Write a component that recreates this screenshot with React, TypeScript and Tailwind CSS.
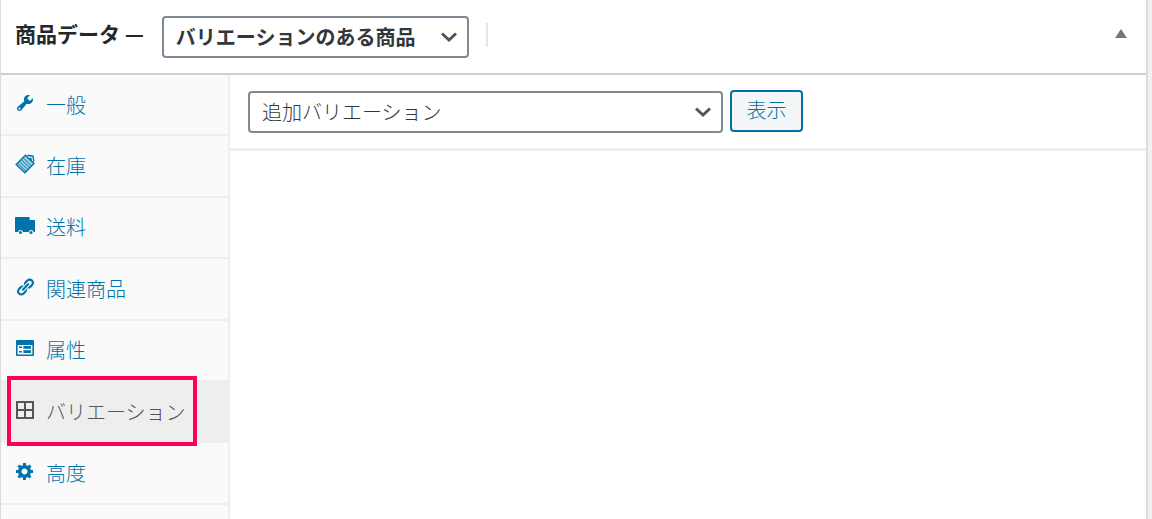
import { useState } from 'react';
import type { ReactNode } from 'react';
import clsx from 'clsx';

type Tab = {
  id: string;
  label: string;
  icon: ReactNode;
};

const tabs: Tab[] = [
  {
    id: 'general',
    label: '一般',
    icon: (
      <path d="M16.68 9.77c-1.34 1.34-3.3 1.67-4.95.99l-5.41 6.52c-.99.99-2.59.99-3.58 0s-.99-2.59 0-3.57l6.52-5.42c-.68-1.65-.35-3.61.99-4.95 1.28-1.28 3.12-1.62 4.72-1.06l-2.89 2.89 2.82 2.82 2.86-2.87c.53 1.58.18 3.39-1.08 4.65zM3.81 16.21c.4.39 1.04.39 1.43 0 .4-.4.4-1.04 0-1.43-.39-.4-1.03-.4-1.43 0-.39.39-.39 1.03 0 1.43z" />
    ),
  },
  {
    id: 'inventory',
    label: '在庫',
    icon: (
      <>
        <path d="M10.4 1.2L19.2 9.6 9.8 19 1 10.4z" opacity=".35" />
        <path
          d="M10.4 1.2L19 9.6 9.8 18.8 1.2 10.4zM12.4 1.2l5.6 1 .8 5.4M13.6 5.2l2.2-.8.6 2.6"
          fill="none"
          stroke="currentColor"
          strokeWidth="1.4"
        />
        <path
          d="M8.6 4.2l7.8 7.8M6.8 6l7.8 7.8M5 7.8l7.8 7.8M3.4 9.6l7.6 7.6"
          fill="none"
          stroke="currentColor"
          strokeWidth=".9"
        />
      </>
    ),
  },
  {
    id: 'shipping',
    label: '送料',
    icon: (
      <>
        <path d="M1 2h13.6v3H19a1 1 0 0 1 1 1v11h-1.4a2.6 2.6 0 0 0-5 0H8a2.6 2.6 0 0 0-5 0H0V3a1 1 0 0 1 1-1z" />
        <circle cx="5.5" cy="17.4" r="1.5" />
        <circle cx="16" cy="17.4" r="1.5" />
      </>
    ),
  },
  {
    id: 'linked',
    label: '関連商品',
    icon: (
      <path d="M17.74 2.76c1.68 1.69 1.68 4.41 0 6.1l-1.53 1.52c-1.12 1.12-2.7 1.47-4.14 1.09l2.62-2.61.76-.77.76-.76c.84-.84.84-2.2 0-3.04-.84-.85-2.2-.85-3.04 0l-.77.76-3.38 3.38c-.37-1.44-.02-3.02 1.1-4.14l1.52-1.53c1.69-1.68 4.42-1.68 6.1 0zM8.59 13.43l5.34-5.34c.42-.42.42-1.1 0-1.52-.44-.43-1.13-.39-1.53 0l-5.33 5.34c-.42.42-.42 1.1 0 1.52.44.43 1.13.39 1.52 0zm-.76 2.29l4.14-4.15c.38 1.44.03 3.02-1.09 4.14l-1.52 1.53c-1.69 1.68-4.41 1.68-6.1 0-1.68-1.68-1.68-4.42 0-6.1l1.53-1.52c1.12-1.12 2.7-1.47 4.14-1.1l-4.14 4.15c-.85.84-.85 2.2 0 3.05.84.84 2.2.84 3.04 0z" />
    ),
  },
  {
    id: 'attributes',
    label: '属性',
    icon: (
      <path
        fillRule="evenodd"
        d="M2 2h16a1 1 0 0 1 1 1v14a1 1 0 0 1-1 1H2a1 1 0 0 1-1-1V3a1 1 0 0 1 1-1zm.6 5v9.4h14.8V7zM4 8.6h3V10H4zm4.4-.6H16v2.8H8.4zM4 13h3v1.4H4zm4.4-.8H16V15H8.4z"
      />
    ),
  },
  {
    id: 'variations',
    label: 'バリエーション',
    icon: <path fillRule="evenodd" d="M1 1h18v18H1zM3 3v6h6V3zm8 0v6h6V3zM3 11v6h6v-6zm8 0v6h6v-6z" />,
  },
  {
    id: 'advanced',
    label: '高度',
    icon: (
      <path d="M18 12h-2.18c-.17.7-.44 1.35-.81 1.93l1.54 1.54-2.1 2.1-1.54-1.54c-.58.36-1.23.63-1.91.79V19H8v-2.18c-.68-.16-1.33-.43-1.91-.79l-1.54 1.54-2.12-2.12 1.54-1.54c-.36-.58-.63-1.23-.79-1.91H1V9.03h2.17c.16-.7.44-1.35.8-1.94L2.43 5.55l2.1-2.1 1.54 1.54c.58-.37 1.24-.64 1.93-.81V2h3v2.18c.68.16 1.33.43 1.91.79l1.54-1.54 2.12 2.12-1.54 1.54c.36.59.64 1.24.8 1.94H18V12zm-8.5 1.5c1.66 0 3-1.34 3-3s-1.34-3-3-3-3 1.34-3 3 1.34 3 3 3z" />
    ),
  },
];

const Chevron = () => (
  <svg
    viewBox="0 0 18 12"
    className="pointer-events-none absolute top-[15px] right-[11px] h-3 w-[18px] text-[#555]"
    fill="none"
    stroke="currentColor"
    strokeWidth="3"
    aria-hidden="true"
  >
    <path d="M2 2.5L9 9l7-6.5" />
  </svg>
);

export default function App() {
  const [active, setActive] = useState('variations');

  return (
    <div className="flex h-screen overflow-hidden bg-[#f1f1f1] pr-1 font-['Noto_Sans_CJK_JP',sans-serif] text-[20px] leading-7 text-[#32373c]">
      <section className="flex flex-1 flex-col border-r-2 border-l border-r-[#dcdcde] border-l-[#dcdcde] bg-white">
        <header className="flex h-[75px] shrink-0 items-center border-b-2 border-[#ccd0d4] pr-[15px] pl-[14px]">
          <label htmlFor="product-type" className="mb-2 text-[21px] font-bold text-[#23282d]">
            商品データ —
          </label>
          <div className="relative ml-[18px]">
            <select
              id="product-type"
              className="h-[42px] w-[307px] appearance-none rounded border-2 border-[#7e8993] bg-white pl-3 font-bold"
            >
              <option>バリエーションのある商品</option>
            </select>
            <Chevron />
          </div>
          <span className="mb-1 ml-[17px] h-6 w-[2px] bg-[#e5e5e5]" />
          <button type="button" aria-label="パネルを切り替え" className="mb-1.5 ml-auto flex p-1">
            <svg viewBox="0 0 12 9" className="h-[9px] w-3" fill="#72777c" aria-hidden="true">
              <path d="M6 0l6 9H0z" />
            </svg>
          </button>
        </header>

        <div className="flex flex-1">
          <ul className="grid min-h-[491px] w-[229px] shrink-0 auto-rows-fr border-r-2 border-[#eee] bg-[#fafafa]">
            {tabs.map((tab) => {
              const selected = tab.id === active;
              return (
                <li
                  key={tab.id}
                  className={clsx('relative border-b-2 border-[#eee]', selected && 'bg-[#eee]')}
                >
                  <a
                    href={`#${tab.id}`}
                    onClick={() => setActive(tab.id)}
                    className={clsx(
                      'flex h-full items-center gap-[11px] pl-[14px] font-light whitespace-nowrap',
                      selected ? 'text-[#555]' : 'text-[#0073aa]',
                    )}
                  >
                    <svg viewBox="0 0 20 20" className="mb-1 size-5 shrink-0" fill="currentColor" aria-hidden="true">
                      {tab.icon}
                    </svg>
                    {tab.label}
                  </a>
                  {selected && (
                    <span className="pointer-events-none absolute -top-[6px] -bottom-[5px] left-[6px] w-[190px] border-4 border-[#ff0052]" />
                  )}
                </li>
              );
            })}
            <li aria-hidden="true" />
          </ul>

          <div className="flex-1">
            <div className="flex gap-[7px] border-b-[3px] border-[#eee] py-[15px] pl-[18px]">
              <div className="relative mt-px">
                <select
                  aria-label="バリエーション操作"
                  className="h-[42px] w-[475px] appearance-none rounded border-2 border-[#7e8993] bg-white pl-3 font-light"
                >
                  <option>追加バリエーション</option>
                </select>
                <Chevron />
              </div>
              <button
                type="button"
                className="h-[42px] w-[73px] rounded border-2 border-[#0071a1] bg-[#f3f5f6] pb-0.5 font-light text-[#0071a1]"
              >
                表示
              </button>
            </div>
          </div>
        </div>
      </section>
    </div>
  );
}
